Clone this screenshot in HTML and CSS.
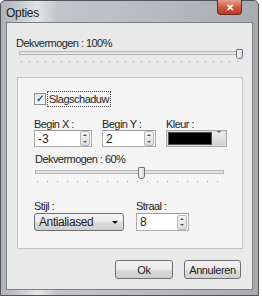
FILE: index.html
```html
<!DOCTYPE html>
<html>
<head>
    <title>Opties</title>
    <link rel="stylesheet" href="styles.css">
</head>
<body>
    <div class="window">
        <div class="titlebar">
            <span class="title">Opties</span>
            <span class="close-btn">&#x2715;</span>
        </div>

        <div class="client">
            <div class="label">Dekvermogen : 100%</div>
            <div class="slider slider-main">
                <div class="track"></div>
                <div class="ticks"></div>
                <div class="thumb" style="left: 217px;"></div>
            </div>

            <div class="panel">
                <div class="check-row">
                    <span class="checkbox">&#x2713;</span>
                    <span class="check-label">Slagschaduw</span>
                </div>

                <div class="field-row">
                    <div class="field col-x">
                        <div class="label">Begin X :</div>
                        <div class="spin">
                            <span class="spin-value">-3</span>
                            <span class="spin-buttons"><i class="up"></i><i class="down"></i></span>
                        </div>
                    </div>
                    <div class="field col-y">
                        <div class="label">Begin Y :</div>
                        <div class="spin">
                            <span class="spin-value">2</span>
                            <span class="spin-buttons"><i class="up"></i><i class="down"></i></span>
                        </div>
                    </div>
                    <div class="field col-color">
                        <div class="label">Kleur :</div>
                        <div class="color-pick">
                            <span class="swatch"></span>
                            <span class="color-drop"><i class="down"></i></span>
                        </div>
                    </div>
                </div>

                <div class="opacity-group">
                    <div class="label">Dekvermogen : 60%</div>
                    <div class="slider slider-shadow">
                        <div class="track"></div>
                        <div class="ticks"></div>
                        <div class="thumb" style="left: 103px;"></div>
                    </div>
                </div>

                <div class="field-row style-row">
                    <div class="field col-style">
                        <div class="label">Stijl :</div>
                        <div class="select">
                            <span>Antialiased</span>
                            <span class="select-arrow"></span>
                        </div>
                    </div>
                    <div class="field col-radius">
                        <div class="label">Straal :</div>
                        <div class="spin">
                            <span class="spin-value">8</span>
                            <span class="spin-buttons"><i class="up"></i><i class="down"></i></span>
                        </div>
                    </div>
                </div>
            </div>

            <div class="actions">
                <button class="btn btn-ok">Ok</button>
                <button class="btn btn-cancel">Annuleren</button>
            </div>
        </div>
    </div>
</body>
</html>
```

FILE: styles.css
```css
body {
    margin: 0;
    background: #ffffff;
    font-family: "Liberation Sans", Arial, sans-serif;
    font-size: 11px;
    color: #1e1e1e;
}

.window {
    width: 259px;
    height: 296px;
    box-sizing: border-box;
    border: 1px solid #505358;
    border-radius: 5px 5px 0 0;
    padding: 0 5px 5px 5px;
    display: flex;
    flex-direction: column;
    background: linear-gradient(to right, #aeb2b7 0%, #c9ccd0 8%, #e2e4e6 14%, #c2c6ca 22%, #b7bbc0 60%, #a8acb1 100%);
}

.titlebar {
    height: 21px;
    display: flex;
    justify-content: space-between;
    align-items: flex-start;
}

.title {
    padding: 5px 0 0 0;
    font-size: 12px;
    letter-spacing: -0.3px;
    color: #202020;
}

.close-btn {
    width: 25px;
    height: 15px;
    margin-top: -1px;
    margin-right: 11px;
    border: 1px solid #6b2b22;
    border-top: none;
    border-radius: 0 0 4px 4px;
    background: linear-gradient(#e6a091, #cf5a44 50%, #b83a24);
    color: #ffffff;
    font-size: 10px;
    font-weight: bold;
    text-align: center;
    line-height: 15px;
    box-sizing: border-box;
}

.client {
    flex: 1;
    background: #e9e9e9;
    border: 1px solid #7c7f84;
    padding: 13px 9px 0 9px;
}

.label {
    line-height: 14px;
    letter-spacing: -0.55px;
    white-space: nowrap;
}

.slider {
    position: relative;
}

.slider .track {
    position: absolute;
    left: 0;
    right: 0;
    height: 2px;
    background: #e4e6e8;
    border: 1px solid #b2b4b7;
}

.slider .ticks {
    position: absolute;
    left: 2px;
    right: 2px;
    height: 1px;
    background: repeating-linear-gradient(to right, #a0a0a0 0, #a0a0a0 1px, transparent 1px, transparent 8px);
}

.slider .thumb {
    position: absolute;
    width: 5px;
    height: 8px;
    border: 1px solid #6f7378;
    border-radius: 1px 1px 3px 3px;
    background: linear-gradient(to right, #f6f6f6, #d8dadc);
}

.slider-main {
    margin-left: 3px;
    width: 221px;
    height: 16px;
}

.slider-main .track {
    top: 1px;
}

.slider-main .thumb {
    top: -1px;
}

.slider-main .ticks {
    top: 11px;
}

.panel {
    margin: 11px 0 0 1px;
    width: 226px;
    height: 172px;
    box-sizing: border-box;
    border: 1px solid #c3c3c3;
    background: #f4f4f4;
    padding: 14px 0 0 16px;
}

.check-row {
    display: flex;
    align-items: center;
    height: 14px;
    gap: 2px;
}

.checkbox {
    width: 10px;
    height: 10px;
    border: 1px solid #8e8f8f;
    background: linear-gradient(#e4e6ea, #fdfdfd);
    color: #2d4f86;
    font-size: 10px;
    font-weight: bold;
    line-height: 10px;
    text-align: center;
}

.check-label {
    outline: 1px dotted #444;
    padding: 0 1px;
    line-height: 14px;
    letter-spacing: -0.5px;
}

.field-row {
    display: flex;
    gap: 10px;
    margin-top: 12px;
}

.field .label {
    line-height: 12px;
}

.col-x {
    width: 58px;
}

.col-y {
    width: 54px;
}

.col-color {
    width: 61px;
}

.spin {
    height: 17px;
    box-sizing: border-box;
    border: 1px solid #abadb3;
    border-top-color: #9a9ca3;
    background: #ffffff;
    display: flex;
    align-items: center;
    justify-content: space-between;
    padding: 0 1px 0 3px;
}

.spin-value {
    font-size: 12px;
}

.spin-buttons {
    width: 8px;
    height: 13px;
    display: flex;
    flex-direction: column;
    border: 1px solid #b5b7ba;
    border-radius: 2px;
    background: linear-gradient(#f4f4f4, #dddddd);
}

.spin-buttons i {
    flex: 1;
    display: flex;
    align-items: center;
    justify-content: center;
}

.up::before {
    content: "";
    border-left: 2px solid transparent;
    border-right: 2px solid transparent;
    border-bottom: 2px solid #555;
}

.down::before {
    content: "";
    border-left: 2px solid transparent;
    border-right: 2px solid transparent;
    border-top: 2px solid #555;
}

.color-pick {
    height: 17px;
    box-sizing: border-box;
    border: 1px solid #a7a9ad;
    background: #dcdcdc;
    display: flex;
    padding: 1px;
}

.swatch {
    flex: 1;
    background: #000000;
    border: 1px solid #555;
}

.color-drop {
    width: 13px;
    display: flex;
    align-items: center;
    justify-content: center;
    background: linear-gradient(#eeeeee, #d2d2d2);
}

.opacity-group {
    margin: 6px 0 0 1px;
    width: 189px;
}

.opacity-group .label {
    line-height: 13px;
}

.slider-shadow {
    width: 189px;
    height: 18px;
}

.slider-shadow .track {
    top: 4px;
}

.slider-shadow .thumb {
    top: 1px;
    height: 10px;
}

.slider-shadow .ticks {
    top: 15px;
    background: repeating-linear-gradient(to right, #a0a0a0 0, #a0a0a0 1px, transparent 1px, transparent 10px);
}

.style-row {
    margin-top: 15px;
    gap: 12px;
}

.style-row .label {
    line-height: 14px;
}

.col-style {
    width: 90px;
}

.col-radius {
    width: 53px;
}

.select {
    height: 18px;
    box-sizing: border-box;
    border: 1px solid #707070;
    border-radius: 3px;
    background: linear-gradient(#f2f2f2 0%, #ebebeb 50%, #dddddd 51%, #cfcfcf 100%);
    display: flex;
    align-items: center;
    justify-content: space-between;
    padding: 0 5px 0 4px;
    font-size: 12px;
    letter-spacing: -0.4px;
}

.select-arrow {
    border-left: 3px solid transparent;
    border-right: 3px solid transparent;
    border-top: 3px solid #111;
}

.col-radius .spin {
    height: 18px;
}

.actions {
    display: flex;
    justify-content: flex-end;
    gap: 11px;
    margin: 11px 2px 0 0;
}

.btn {
    height: 19px;
    box-sizing: border-box;
    border: 1px solid #707070;
    border-radius: 3px;
    background: linear-gradient(#f2f2f2 0%, #ebebeb 50%, #dddddd 51%, #cfcfcf 100%);
    font-family: "Liberation Sans", Arial, sans-serif;
    font-size: 11px;
    letter-spacing: -0.4px;
    color: #1e1e1e;
    padding: 0;
}

.btn-ok {
    width: 58px;
}

.btn-cancel {
    width: 57px;
}
```
